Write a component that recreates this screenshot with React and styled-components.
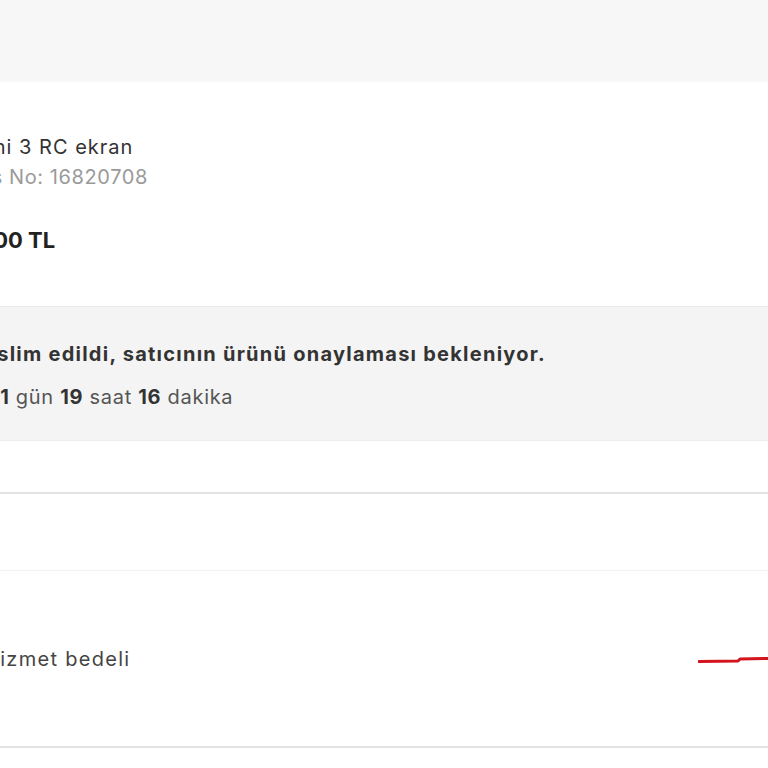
import { createGlobalStyle, styled } from "styled-components";

const GlobalStyle = createGlobalStyle`
  html, body {
    margin: 0;
    padding: 0;
    background: #fff;
    overflow: hidden;
  }
  body {
    font-family: Inter, "Noto Sans", sans-serif;
    color: #333;
  }
`;

export default function App() {
  return (
    <Page>
      <GlobalStyle />
      <TopBand />
      <ProductSection>
        <Title $shift={-72}>DJI Mini 3 RC ekran</Title>
        <OrderNo $shift={-66}>Sipariş No: 16820708</OrderNo>
        <Price $shift={-78}>4.500,00 TL</Price>
      </ProductSection>
      <StatusBox>
        <StatusText $shift={-83}>
          Ürün teslim edildi, satıcının ürünü onaylaması bekleniyor.
        </StatusText>
        <Remaining $shift={-119}>
          Kalan süre: <b>1</b> gün <b>19</b> saat <b>16</b> dakika
        </Remaining>
      </StatusBox>
      <Spacer $height={53} $line="#e3e3e3" $lineWidth={2} />
      <Spacer $height={77} $line="#f3f3f3" $lineWidth={1} />
      <FeeRow>
        <FeeLabel $shift={-16}>Hizmet bedeli</FeeLabel>
        <Scribble width="70" height="10" viewBox="0 0 70 10">
          <path
            d="M1 7.5 L40 7 L42 5 L70 4.5"
            stroke="#d3141d"
            strokeWidth="3"
            fill="none"
            strokeLinecap="round"
            strokeLinejoin="round"
          />
        </Scribble>
      </FeeRow>
    </Page>
  );
}

const Page = styled.div`
  width: 768px;
  height: 768px;
  display: flex;
  flex-direction: column;
  overflow: hidden;
  background: #fff;
`;

const TopBand = styled.div`
  height: 82px;
  flex-shrink: 0;
  background: #f7f7f7;
`;

const ProductSection = styled.section`
  height: 225px;
  flex-shrink: 0;
  box-sizing: border-box;
  padding-top: 50px;
  display: flex;
  flex-direction: column;
  border-bottom: 1px solid #e9e9e9;
`;

const Line = styled.div`
  margin-left: ${(props) => props.$shift}px;
  white-space: nowrap;
`;

const Title = styled(Line)`
  font-size: 20px;
  line-height: 30px;
  letter-spacing: 1px;
  color: #333;
`;

const OrderNo = styled(Line)`
  font-size: 20px;
  line-height: 30px;
  letter-spacing: 0.6px;
  color: #9a9a9a;
`;

const Price = styled(Line)`
  margin-top: 33px;
  font-size: 22px;
  line-height: 30px;
  font-weight: 700;
  color: #222;
`;

const StatusBox = styled.section`
  height: 134px;
  flex-shrink: 0;
  box-sizing: border-box;
  padding-top: 34px;
  background: #f4f4f4;
  border-bottom: 1px solid #ececec;
  display: flex;
  flex-direction: column;
  gap: 17px;
`;

const StatusText = styled(Line)`
  font-size: 20px;
  line-height: 26px;
  letter-spacing: 1.25px;
  font-weight: 700;
  color: #333;
`;

const Remaining = styled(Line)`
  font-size: 20px;
  line-height: 26px;
  letter-spacing: 0.7px;
  color: #555;
  b {
    color: #333;
    font-weight: 700;
  }
`;

const Spacer = styled.div`
  height: ${(props) => props.$height}px;
  flex-shrink: 0;
  box-sizing: border-box;
  border-bottom: ${(props) => props.$lineWidth}px solid ${(props) => props.$line};
`;

const FeeRow = styled.section`
  height: 177px;
  flex-shrink: 0;
  box-sizing: border-box;
  display: flex;
  align-items: center;
  justify-content: space-between;
  padding-top: 1px;
  border-bottom: 2px solid #e3e3e3;
`;

const FeeLabel = styled(Line)`
  font-size: 20px;
  line-height: 28px;
  letter-spacing: 1.3px;
  color: #444;
`;

const Scribble = styled.svg`
  display: block;
  flex-shrink: 0;
`;
